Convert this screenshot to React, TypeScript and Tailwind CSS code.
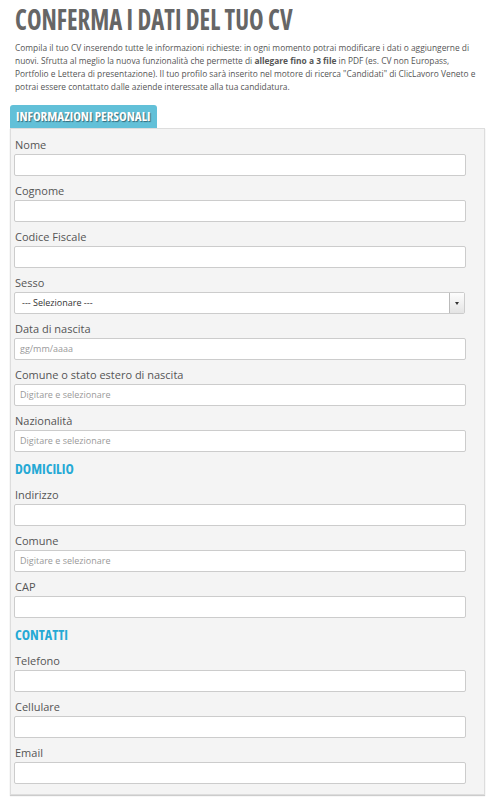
import React from 'react';

const body = { fontFamily: '"Open Sans", "Liberation Sans", sans-serif' };
const cond = {
  fontFamily: '"Open Sans", "Liberation Sans Narrow", "DejaVu Sans Condensed", sans-serif',
  fontStretch: '75%',
};

function Field({ label, placeholder }: { label: string; placeholder?: string }) {
  return (
    <div className="mt-[6px] first:mt-0">
      <div className="text-[11px] leading-[18px] text-[#555] pl-[1px]">{label}</div>
      <div className="h-[22px] w-[452px] bg-white border border-[#ccc] rounded-[2px] flex items-center px-[5px]">
        {placeholder && <span className="text-[9px] text-[#999]">{placeholder}</span>}
      </div>
    </div>
  );
}

function SelectField({ label }: { label: string }) {
  return (
    <div className="mt-[6px]">
      <div className="text-[11px] leading-[18px] text-[#555] pl-[1px]">{label}</div>
      <div className="h-[22px] w-[451px] bg-white border border-[#ccc] rounded-[2px] flex items-center justify-between pl-[7px]">
        <span className="text-[9px] text-[#333]">--- Selezionare ---</span>
        <div className="h-[20px] w-[15px] bg-gradient-to-b from-[#fdfdfd] to-[#e4e4e4] border-l border-[#bbb] flex items-center justify-center">
          <span className="block w-0 h-0 border-l-[2px] border-r-[2px] border-t-[3px] border-l-transparent border-r-transparent border-t-[#333]" />
        </div>
      </div>
    </div>
  );
}

function Section({ title }: { title: string }) {
  return (
    <div className="mt-[6px] text-[14px] leading-[22px] font-bold text-[#25a9d5] pl-[1px]" style={cond}>
      {title}
    </div>
  );
}

export default function App() {
  return (
    <div className="w-[498px] h-[803px] bg-white overflow-hidden" style={body}>
      <div className="px-[15px] pt-[1px]">
        <h1
          className="inline-block origin-left scale-x-[0.85] text-[29px] leading-[36px] font-bold text-[#666] whitespace-nowrap"
          style={cond}
        >
          CONFERMA I DATI DEL TUO CV
        </h1>
        <p className="mt-[4px] text-[8.4px] leading-[13px] text-[#555] whitespace-nowrap">
          Compila il tuo CV inserendo tutte le informazioni richieste: in ogni momento potrai modificare i dati o aggiungerne di
          <br />
          nuovi. Sfrutta al meglio la nuova funzionalità che permette di <b>allegare fino a 3 file</b> in PDF (es. CV non Europass,
          <br />
          Portfolio e Lettera di presentazione). Il tuo profilo sarà inserito nel motore di ricerca "Candidati" di ClicLavoro Veneto e
          <br />
          potrai essere contattato dalle aziende interessate alla tua candidatura.
        </p>
      </div>

      <div className="ml-[10px] mt-[12px] w-[475px]">
        <div
          className="w-[147px] h-[23px] bg-[#62c0d8] rounded-t-[3px] flex items-center pl-[6px] text-white font-bold text-[13px] [text-shadow:1px_1px_1px_rgba(0,0,0,0.45)]"
          style={cond}
        >
          INFORMAZIONI PERSONALI
        </div>
        <div className="bg-[#f4f4f4] border border-[#ddd] shadow-[0_1px_1px_rgba(0,0,0,0.2)] pl-[3px] pt-[7px] pb-[10px]">
          <Field label="Nome" />
          <Field label="Cognome" />
          <Field label="Codice Fiscale" />
          <SelectField label="Sesso" />
          <Field label="Data di nascita" placeholder="gg/mm/aaaa" />
          <Field label="Comune o stato estero di nascita" placeholder="Digitare e selezionare" />
          <Field label="Nazionalità" placeholder="Digitare e selezionare" />
          <Section title="DOMICILIO" />
          <Field label="Indirizzo" />
          <Field label="Comune" placeholder="Digitare e selezionare" />
          <Field label="CAP" />
          <Section title="CONTATTI" />
          <Field label="Telefono" />
          <Field label="Cellulare" />
          <Field label="Email" />
        </div>
      </div>
    </div>
  );
}
